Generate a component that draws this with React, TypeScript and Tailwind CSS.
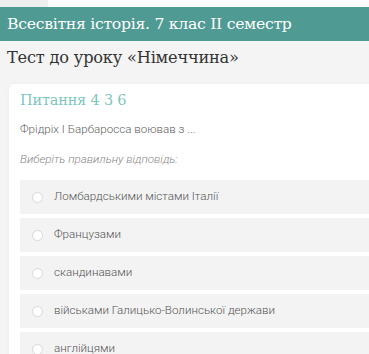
import React from "react";

const options = [
  "Ломбардськими містами Італії",
  "Французами",
  "скандинавами",
  "військами Галицько-Волинської держави",
  "англійцями",
];

export default function App() {
  return (
    <div className="w-[369px] h-[354px] overflow-hidden bg-[#f4f4f4]" style={{ fontFamily: "Roboto, 'Noto Sans', sans-serif" }}>
      <div className="h-[7px] flex">
        <div className="w-[48px] bg-[#eeeeee]" />
        <div className="flex-1 bg-[#fbfbfb]" />
      </div>
      <div className="h-[34px] bg-[#4f9a93] flex items-center pl-[7px]">
        <span className="text-white text-[15.7px] leading-none tracking-[-0.3px]" style={{ fontFamily: "'DejaVu Serif', serif" }}>
          Всесвітня історія. 7 клас II семестр
        </span>
      </div>
      <div className="pl-[7px] pt-[5px] h-[43px]">
        <span className="text-[#333] text-[16.2px] leading-[20px] tracking-[-0.2px]" style={{ fontFamily: "'DejaVu Serif', serif" }}>
          Тест до уроку «Німеччина»
        </span>
      </div>
      <div className="ml-[9px] bg-white rounded-l-[5px] shadow-[0_0_3px_rgba(0,0,0,0.06)] pl-[11px] pt-[6px]">
        <div className="text-[#7ec6bd] text-[14.5px] leading-[20px] tracking-[-0.2px]" style={{ fontFamily: "'DejaVu Serif', serif" }}>
          Питання 4 3 6
        </div>
        <div className="mt-[11px] text-[#5f5f5f] text-[11.6px] font-light leading-[16px]">
          Фрідріх I Барбаросса воював з ...
        </div>
        <div className="mt-[14px] text-[#888] text-[11.6px] italic font-light leading-[16px]">
          Виберіть правильну відповідь:
        </div>
        <div className="mt-[13px] flex flex-col gap-[4px]">
          {options.map((o) => (
            <div key={o} className="h-[34px] bg-[#f3f3f3] flex items-center pl-[12px]">
              <div className="w-[11px] h-[11px] rounded-full bg-white border border-[#d8d8d8]" />
              <span className="ml-[11px] text-[11.6px] text-[#555] font-light">{o}</span>
            </div>
          ))}
        </div>
      </div>
    </div>
  );
}
